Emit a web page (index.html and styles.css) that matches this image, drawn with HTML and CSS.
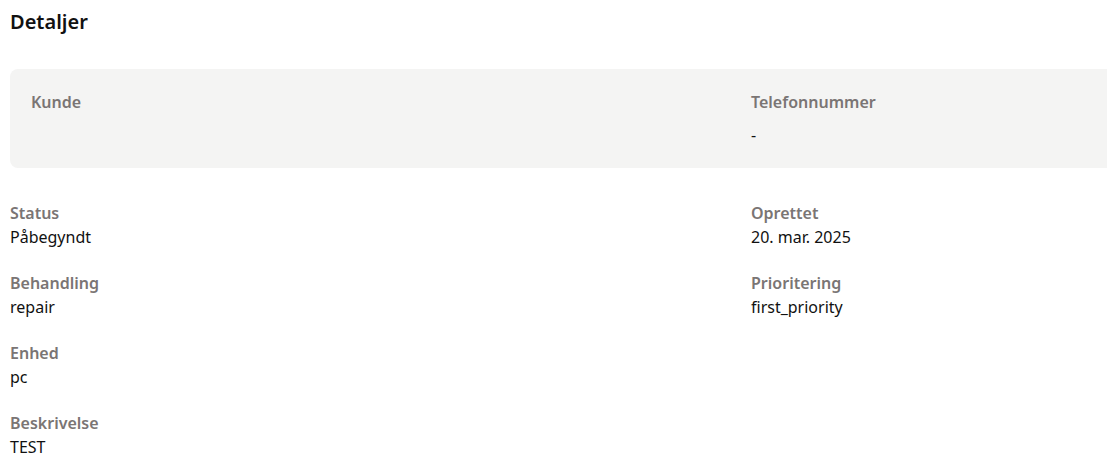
FILE: index.html
```html
<!DOCTYPE html>
<html lang="da">
<head>
<meta charset="utf-8">
<title>Detaljer</title>
<link rel="stylesheet" href="styles.css">
</head>
<body>
<main class="details">
  <h2 class="title">Detaljer</h2>
  <section class="customer-card">
    <div class="field">
      <div class="label">Kunde</div>
      <div class="value"></div>
    </div>
    <div class="field">
      <div class="label">Telefonnummer</div>
      <div class="value">-</div>
    </div>
  </section>
  <section class="info-grid">
    <div class="column">
      <div class="item">
        <div class="label">Status</div>
        <div class="value">Påbegyndt</div>
      </div>
      <div class="item">
        <div class="label">Behandling</div>
        <div class="value">repair</div>
      </div>
      <div class="item">
        <div class="label">Enhed</div>
        <div class="value">pc</div>
      </div>
      <div class="item">
        <div class="label">Beskrivelse</div>
        <div class="value">TEST</div>
      </div>
    </div>
    <div class="column">
      <div class="item">
        <div class="label">Oprettet</div>
        <div class="value">20. mar. 2025</div>
      </div>
      <div class="item">
        <div class="label">Prioritering</div>
        <div class="value">first_priority</div>
      </div>
    </div>
  </section>
</main>
</body>
</html>
```
FILE: styles.css
```css
html{overflow:hidden;}
body{
  margin:0;
  padding:8px 0 0 10px;
  font-family:"Noto Sans","Open Sans",sans-serif;
  font-size:16px;
  color:#1b1a19;
  background:#fff;
}
.title{
  margin:0 0 33px;
  font-size:20px;
  line-height:28px;
  font-weight:600;
  color:#111;
}
.customer-card{
  display:grid;
  grid-template-columns:720px 1fr;
  background:#f4f4f3;
  border-radius:8px 0 0 8px;
  padding:21px 21px 22px;
  height:99px;
  box-sizing:border-box;
}
.customer-card .field{display:flex;flex-direction:column;gap:9px;}
.label{
  font-weight:600;
  line-height:24px;
  color:#7a7574;
}
.value{line-height:24px;min-height:24px;color:#111;}
.info-grid{
  display:grid;
  grid-template-columns:741px 1fr;
  margin-top:33px;
}
.column{display:flex;flex-direction:column;gap:22px;}
```
